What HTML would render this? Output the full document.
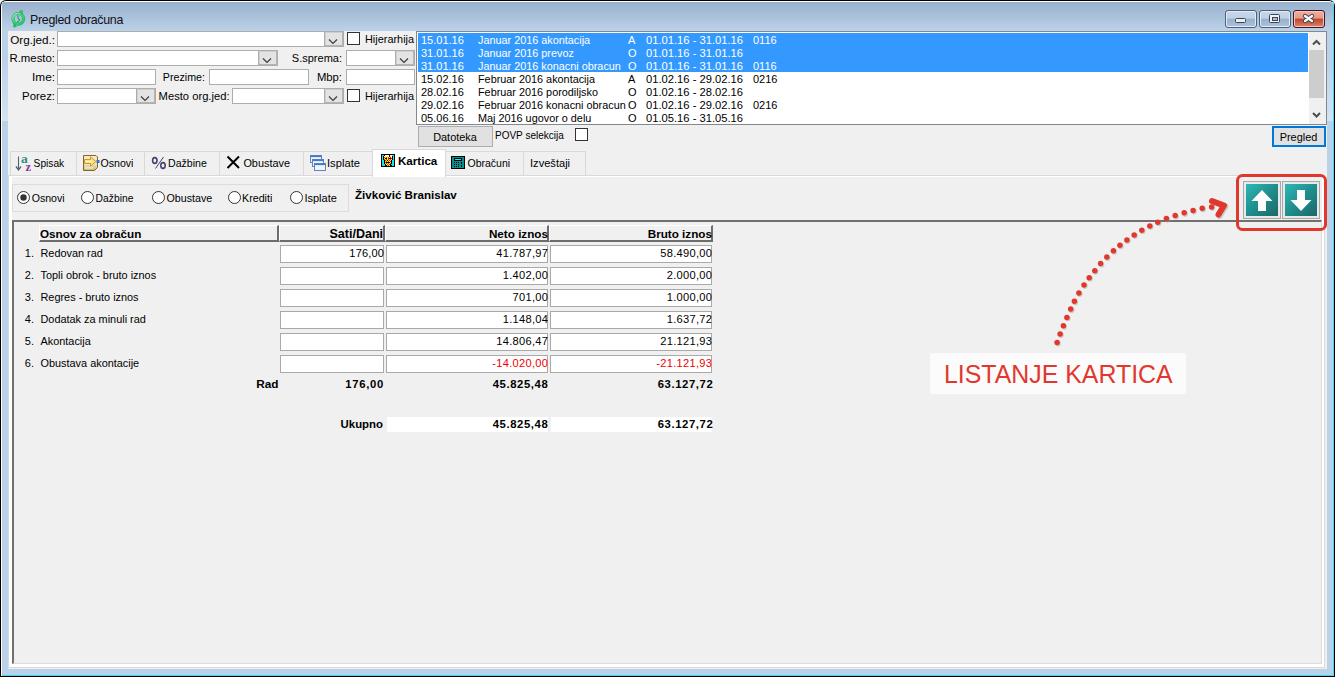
<!DOCTYPE html><html><head><meta charset="utf-8"><style>
html,body{margin:0;padding:0;width:1335px;height:677px;overflow:hidden;background:#f0f0f0}
#root{position:relative;width:1335px;height:677px;overflow:hidden;font-family:'Liberation Sans', sans-serif}
#root div, #root svg{position:absolute}
.t{white-space:pre;line-height:13px;height:13px}

</style></head><body><div id="root">
<div style="left:0px;top:0px;width:1335px;height:677px;background:#000;border-radius:6px 6px 0 0"></div>
<div style="left:1px;top:1px;width:1333px;height:675px;background:#fff;border-radius:5px 5px 0 0"></div>
<div style="left:2px;top:2px;width:1332px;height:674px;background:#3fd8ee"></div>
<div style="left:2px;top:2px;width:1331px;height:673px;background:#bad1ea"></div>
<div style="left:2px;top:2px;width:1331px;height:29px;background:linear-gradient(#98b0cc,#bcd2e9);border-radius:4px 4px 0 0"></div>
<div style="left:2px;top:31px;width:6px;height:90px;background:linear-gradient(#bad1ea 0%,#bad1ea 30%,#d3e3f3 100%)"></div>
<div style="left:1327px;top:31px;width:6px;height:90px;background:linear-gradient(#bad1ea 0%,#bad1ea 30%,#d3e3f3 100%)"></div>
<div style="left:8px;top:31px;width:1319px;height:638px;background:#f0f0f0"></div>
<svg style="left:9px;top:9px" width="20" height="20" viewBox="0 0 20 20">
<defs><linearGradient id="gr" x1="0" y1="0" x2="0.6" y2="1"><stop offset="0" stop-color="#86f2ae"/><stop offset="0.5" stop-color="#2ee070"/><stop offset="1" stop-color="#14d85a"/></linearGradient></defs>
<circle cx="9.3" cy="9.8" r="5.3" fill="none" stroke="#1a8a4c" stroke-width="3.2" stroke-opacity="0.75"/>
<circle cx="9.3" cy="9.8" r="5.3" fill="none" stroke="url(#gr)" stroke-width="2.2"/>
<path d="M10.5 2 L13.5 1.8 L13 5.5 Z" fill="#3fcf7a" stroke="#1a8a4c" stroke-width="0.5"/>
<path d="M7.5 17.8 L4.5 18 L5 14.5 Z" fill="#1ed860" stroke="#1a8a4c" stroke-width="0.5"/>
<path d="M8.3 6.5 C10.5 7.5 7.5 9.2 10 10.2 C11.5 11 9.5 12.5 8.3 13" fill="none" stroke="#2a9a5a" stroke-width="1.1"/>
</svg>
<div class="t" style="left:30px;top:14px;font-size:12.4px;font-weight:normal;color:#10101a;letter-spacing:-0.3px">Pregled obračuna</div>
<div style="left:1225px;top:10px;width:32px;height:18px;box-sizing:border-box;border:1px solid #4f5f78;border-radius:3px;background:linear-gradient(#c6d7ea 0,#bfd1e6 45%,#98b1cc 50%,#abc2da 100%);box-shadow:inset 0 0 0 1px #e3ecf6"></div>
<div style="left:1259px;top:10px;width:32px;height:18px;box-sizing:border-box;border:1px solid #4f5f78;border-radius:3px;background:linear-gradient(#c6d7ea 0,#bfd1e6 45%,#98b1cc 50%,#abc2da 100%);box-shadow:inset 0 0 0 1px #e3ecf6"></div>
<div style="left:1293px;top:10px;width:32px;height:18px;box-sizing:border-box;border:1px solid #4a1020;border-radius:3px;background:linear-gradient(#eeb0a0 0,#e59a87 45%,#c2432a 50%,#d98470 100%);box-shadow:inset 0 0 0 1px #f6c8bb"></div>
<div style="left:1235px;top:18px;width:11px;height:5px;box-sizing:border-box;border:1px solid #3a4658;background:#eeeeee;border-radius:1.5px"></div>
<div style="left:1269px;top:14px;width:11px;height:9px;box-sizing:border-box;border:1px solid #3a4658;background:#f2f2f2;border-radius:1.5px"></div>
<div style="left:1272px;top:17px;width:6px;height:4px;box-sizing:border-box;border:1px solid #3a4658;background:#a8c0da"></div>
<svg style="left:1300px;top:11px" width="17" height="15"><path d="M5 5 L12 10 M12 5 L5 10" stroke="#3a4252" stroke-width="4.2" stroke-linecap="round"/><path d="M5 5 L12 10 M12 5 L5 10" stroke="#f8f8f8" stroke-width="2.4" stroke-linecap="round"/></svg>
<div class="t" style="left:-245px;width:300px;text-align:right;top:33px;font-size:11.7px;font-weight:normal;color:#000;">Org.jed.:</div>
<div class="t" style="left:-245px;width:300px;text-align:right;top:52px;font-size:11.4px;font-weight:normal;color:#000;">R.mesto:</div>
<div class="t" style="left:-245px;width:300px;text-align:right;top:71px;font-size:11.8px;font-weight:normal;color:#000;">Ime:</div>
<div class="t" style="left:-245px;width:300px;text-align:right;top:90px;font-size:11.4px;font-weight:normal;color:#000;">Porez:</div>
<div style="left:57px;top:31px;width:287px;height:16px;box-sizing:border-box;border:1px solid #adadad;background:#fff"></div>
<div style="left:324px;top:31px;width:20px;height:16px;box-sizing:border-box;border:1px solid #adadad;background:#e3e3e3;box-shadow:inset -1px -1px 0 0 #b4b4b4, inset 1px 1px 0 0 #d0d0d0"></div>
<svg style="left:324px;top:31px" width="20" height="16"><polyline points="5.0,8.5 9.0,12.5 13.0,8.5" fill="none" stroke="#3c3c3c" stroke-width="1.2"/></svg>
<div style="left:347px;top:32px;width:13px;height:13px;box-sizing:border-box;border:1px solid #333;background:#fff"></div>
<div class="t" style="left:365px;top:33px;font-size:10.9px;font-weight:normal;color:#000;">Hijerarhija</div>
<div style="left:57px;top:50px;width:221px;height:16px;box-sizing:border-box;border:1px solid #adadad;background:#fff"></div>
<div style="left:258px;top:50px;width:20px;height:16px;box-sizing:border-box;border:1px solid #adadad;background:#e3e3e3;box-shadow:inset -1px -1px 0 0 #b4b4b4, inset 1px 1px 0 0 #d0d0d0"></div>
<svg style="left:258px;top:50px" width="20" height="16"><polyline points="5.0,8.5 9.0,12.5 13.0,8.5" fill="none" stroke="#3c3c3c" stroke-width="1.2"/></svg>
<div class="t" style="left:42px;width:300px;text-align:right;top:52px;font-size:11px;font-weight:normal;color:#000;">S.sprema:</div>
<div style="left:346px;top:50px;width:69px;height:16px;box-sizing:border-box;border:1px solid #adadad;background:#fff"></div>
<div style="left:395px;top:50px;width:20px;height:16px;box-sizing:border-box;border:1px solid #adadad;background:#e3e3e3;box-shadow:inset -1px -1px 0 0 #b4b4b4, inset 1px 1px 0 0 #d0d0d0"></div>
<svg style="left:395px;top:50px" width="20" height="16"><polyline points="5.0,8.5 9.0,12.5 13.0,8.5" fill="none" stroke="#3c3c3c" stroke-width="1.2"/></svg>
<div style="left:57px;top:69px;width:99px;height:16px;box-sizing:border-box;border:1px solid #adadad;background:#fff"></div>
<div class="t" style="left:-95px;width:300px;text-align:right;top:71px;font-size:10.7px;font-weight:normal;color:#000;">Prezime:</div>
<div style="left:209px;top:69px;width:100px;height:16px;box-sizing:border-box;border:1px solid #adadad;background:#fff"></div>
<div class="t" style="left:42px;width:300px;text-align:right;top:71px;font-size:11.3px;font-weight:normal;color:#000;">Mbp:</div>
<div style="left:346px;top:69px;width:69px;height:16px;box-sizing:border-box;border:1px solid #adadad;background:#fff"></div>
<div style="left:57px;top:88px;width:99px;height:16px;box-sizing:border-box;border:1px solid #adadad;background:#fff"></div>
<div style="left:136px;top:88px;width:20px;height:16px;box-sizing:border-box;border:1px solid #adadad;background:#e3e3e3;box-shadow:inset -1px -1px 0 0 #b4b4b4, inset 1px 1px 0 0 #d0d0d0"></div>
<svg style="left:136px;top:88px" width="20" height="16"><polyline points="5.0,8.5 9.0,12.5 13.0,8.5" fill="none" stroke="#3c3c3c" stroke-width="1.2"/></svg>
<div class="t" style="left:-70.5px;width:300px;text-align:right;top:90px;font-size:11.2px;font-weight:normal;color:#000;">Mesto org.jed:</div>
<div style="left:232px;top:88px;width:112px;height:16px;box-sizing:border-box;border:1px solid #adadad;background:#fff"></div>
<div style="left:324px;top:88px;width:20px;height:16px;box-sizing:border-box;border:1px solid #adadad;background:#e3e3e3;box-shadow:inset -1px -1px 0 0 #b4b4b4, inset 1px 1px 0 0 #d0d0d0"></div>
<svg style="left:324px;top:88px" width="20" height="16"><polyline points="5.0,8.5 9.0,12.5 13.0,8.5" fill="none" stroke="#3c3c3c" stroke-width="1.2"/></svg>
<div style="left:347px;top:89px;width:13px;height:13px;box-sizing:border-box;border:1px solid #333;background:#fff"></div>
<div class="t" style="left:365px;top:90px;font-size:10.9px;font-weight:normal;color:#000;">Hijerarhija</div>
<div style="left:416px;top:31px;width:911px;height:94px;box-sizing:border-box;border:1px solid #828790;background:#fff"></div>
<div style="left:417px;top:32px;width:892px;height:92px;overflow:hidden">
<div style="left:1px;top:1px;width:890px;height:13px;background:#3399ff"></div>
<div class="t" style="left:4px;top:2px;font-size:11px;color:#fff">15.01.16</div>
<div class="t" style="left:61px;top:2px;font-size:10.85px;color:#fff">Januar 2016 akontacija</div>
<div class="t" style="left:211px;top:2px;font-size:11px;color:#fff">A</div>
<div class="t" style="left:229px;top:2px;font-size:11.2px;color:#fff">01.01.16 - 31.01.16</div>
<div class="t" style="left:336px;top:2px;font-size:11px;color:#fff">0116</div>
<div style="left:1px;top:14px;width:890px;height:13px;background:#3399ff"></div>
<div class="t" style="left:4px;top:15px;font-size:11px;color:#fff">31.01.16</div>
<div class="t" style="left:61px;top:15px;font-size:10.85px;color:#fff">Januar 2016 prevoz</div>
<div class="t" style="left:211px;top:15px;font-size:11px;color:#fff">O</div>
<div class="t" style="left:229px;top:15px;font-size:11.2px;color:#fff">01.01.16 - 31.01.16</div>
<div style="left:1px;top:27px;width:890px;height:13px;background:#3399ff"></div>
<div class="t" style="left:4px;top:28px;font-size:11px;color:#fff">31.01.16</div>
<div class="t" style="left:61px;top:28px;font-size:10.85px;color:#fff">Januar 2016 konacni obracun</div>
<div class="t" style="left:211px;top:28px;font-size:11px;color:#fff">O</div>
<div class="t" style="left:229px;top:28px;font-size:11.2px;color:#fff">01.01.16 - 31.01.16</div>
<div class="t" style="left:336px;top:28px;font-size:11px;color:#fff">0116</div>
<div class="t" style="left:4px;top:41px;font-size:11px;color:#000">15.02.16</div>
<div class="t" style="left:61px;top:41px;font-size:10.85px;color:#000">Februar 2016 akontacija</div>
<div class="t" style="left:211px;top:41px;font-size:11px;color:#000">A</div>
<div class="t" style="left:229px;top:41px;font-size:11.2px;color:#000">01.02.16 - 29.02.16</div>
<div class="t" style="left:336px;top:41px;font-size:11px;color:#000">0216</div>
<div class="t" style="left:4px;top:54px;font-size:11px;color:#000">28.02.16</div>
<div class="t" style="left:61px;top:54px;font-size:10.85px;color:#000">Februar 2016 porodiljsko</div>
<div class="t" style="left:211px;top:54px;font-size:11px;color:#000">O</div>
<div class="t" style="left:229px;top:54px;font-size:11.2px;color:#000">01.02.16 - 28.02.16</div>
<div class="t" style="left:4px;top:67px;font-size:11px;color:#000">29.02.16</div>
<div class="t" style="left:61px;top:67px;font-size:10.85px;color:#000">Februar 2016 konacni obracun</div>
<div class="t" style="left:211px;top:67px;font-size:11px;color:#000">O</div>
<div class="t" style="left:229px;top:67px;font-size:11.2px;color:#000">01.02.16 - 29.02.16</div>
<div class="t" style="left:336px;top:67px;font-size:11px;color:#000">0216</div>
<div class="t" style="left:4px;top:80px;font-size:11px;color:#000">05.06.16</div>
<div class="t" style="left:61px;top:80px;font-size:10.85px;color:#000">Maj 2016 ugovor o delu</div>
<div class="t" style="left:211px;top:80px;font-size:11px;color:#000">O</div>
<div class="t" style="left:229px;top:80px;font-size:11.2px;color:#000">01.05.16 - 31.05.16</div>
</div>
<div style="left:1309px;top:32px;width:17px;height:92px;background:#f0f0f0"></div>
<div style="left:1309px;top:50px;width:15px;height:48px;background:#cdcdcd"></div>
<svg style="left:1309px;top:32px" width="17" height="92"><polyline points="4,12.5 7.5,9 11,12.5" fill="none" stroke="#4d4d4d" stroke-width="2"/><polyline points="4,81 7.5,84.5 11,81" fill="none" stroke="#4d4d4d" stroke-width="2"/></svg>
<div style="left:418px;top:126px;width:75px;height:21px;box-sizing:border-box;border:1px solid #adadad;background:#e1e1e1"></div>
<div class="t" style="left:305px;width:300px;text-align:center;top:131px;font-size:10.9px;font-weight:normal;color:#000;">Datoteka</div>
<div class="t" style="left:495px;top:129px;font-size:10px;font-weight:normal;color:#000;">POVP selekcija</div>
<div style="left:575px;top:128px;width:13px;height:13px;box-sizing:border-box;border:1px solid #333;background:#fff"></div>
<div style="left:1272px;top:126px;width:54px;height:21px;box-sizing:border-box;border:2px solid #0078d7;background:#e1e1e1"></div>
<div class="t" style="left:1148.5px;width:300px;text-align:center;top:131px;font-size:10.9px;font-weight:normal;color:#000;">Pregled</div>
<div style="left:10px;top:151px;width:67px;height:25px;box-sizing:border-box;border:1px solid #d9d9d9;border-bottom:none;background:#f0f0f0"></div>
<div style="left:76px;top:151px;width:69px;height:25px;box-sizing:border-box;border:1px solid #d9d9d9;border-bottom:none;background:#f0f0f0"></div>
<div style="left:144px;top:151px;width:76px;height:25px;box-sizing:border-box;border:1px solid #d9d9d9;border-bottom:none;background:#f0f0f0"></div>
<div style="left:219px;top:151px;width:85px;height:25px;box-sizing:border-box;border:1px solid #d9d9d9;border-bottom:none;background:#f0f0f0"></div>
<div style="left:303px;top:151px;width:70px;height:25px;box-sizing:border-box;border:1px solid #d9d9d9;border-bottom:none;background:#f0f0f0"></div>
<div style="left:445px;top:151px;width:79px;height:25px;box-sizing:border-box;border:1px solid #d9d9d9;border-bottom:none;background:#f0f0f0"></div>
<div style="left:523px;top:151px;width:63px;height:25px;box-sizing:border-box;border:1px solid #d9d9d9;border-bottom:none;background:#f0f0f0"></div>
<div class="t" style="left:33.6px;top:157px;font-size:10.2px;font-weight:normal;color:#000;">Spisak</div>
<div class="t" style="left:100.5px;top:157px;font-size:10.6px;font-weight:normal;color:#000;">Osnovi</div>
<div class="t" style="left:168px;top:157px;font-size:10.6px;font-weight:normal;color:#000;">Dažbine</div>
<div class="t" style="left:243.4px;top:157px;font-size:10.9px;font-weight:normal;color:#000;">Obustave</div>
<div class="t" style="left:327px;top:157px;font-size:11.2px;font-weight:normal;color:#000;">Isplate</div>
<div class="t" style="left:467.5px;top:157px;font-size:10.5px;font-weight:normal;color:#000;">Obračuni</div>
<div class="t" style="left:530px;top:157px;font-size:11.1px;font-weight:normal;color:#000;">Izveštaji</div>
<div style="left:8px;top:175px;width:1317px;height:493px;box-sizing:border-box;border:1px solid #d9d9d9;background:#fff"></div>
<div style="left:12px;top:177px;width:1310px;height:487px;background:#f0f0f0"></div>
<div style="left:372px;top:149px;width:74px;height:28px;box-sizing:border-box;border:1px solid #d9d9d9;border-bottom:none;background:#fff"></div>
<div class="t" style="left:398px;top:154px;font-size:11.6px;font-weight:bold;color:#000;">Kartica</div>
<svg style="left:15px;top:154px" width="19" height="18">
<path d="M3.5 2.5 V15" stroke="#4f6275" stroke-width="1.1"/><path d="M1 12.5 L3.5 16 L6 12.5" fill="none" stroke="#4f6275" stroke-width="1.3"/>
<text x="6" y="8.8" font-family="Liberation Serif" font-weight="bold" font-size="13.5" fill="#2a8f7e">a</text>
<text x="10.6" y="16.9" font-family="Liberation Serif" font-weight="bold" font-size="12.5" fill="#8c3a9e">z</text>
</svg>
<svg style="left:83px;top:155px" width="17" height="16">
<defs><linearGradient id="og" x1="0" y1="0" x2="0" y2="1"><stop offset="0" stop-color="#f2ecc8"/><stop offset="0.6" stop-color="#eae2b8"/><stop offset="1" stop-color="#c8b478"/></linearGradient></defs>
<path d="M0.5 0.5 H13 L14.5 2 V12.5 L11.5 15.5 H0.5 Z" fill="url(#og)" stroke="#8b6428"/>
<path d="M1.5 4.5 H7.5 V1.8 L12.8 6.5 L7.5 11.2 V8.5 H1.5 Z" fill="#fbe17a" stroke="#c8901c" stroke-width="0.9"/>
<path d="M2.5 6.5 H9" stroke="#fff6c8" stroke-width="1.2"/>
<path d="M2 13 H10" stroke="#fffbe8" stroke-width="1"/>
<rect x="13.5" y="5" width="3" height="3" fill="#3a6cc0"/>
</svg>
<svg style="left:151px;top:156px" width="17" height="14">
<ellipse cx="3.8" cy="4.5" rx="2.2" ry="2.9" fill="none" stroke="#4a3f73" stroke-width="1.6"/>
<ellipse cx="12" cy="9.5" rx="2.2" ry="2.9" fill="none" stroke="#4a3f73" stroke-width="1.6"/>
<path d="M12.5 1 L4.5 12.5" stroke="#4a3f73" stroke-width="1"/>
</svg>
<svg style="left:226px;top:155px" width="15" height="15">
<path d="M1.5 1.5 L13 13 M13 1.5 L1.5 13" stroke="#000" stroke-width="2"/>
</svg>
<svg style="left:309px;top:154px" width="18" height="18">
<g stroke="#5a78b0" stroke-width="0.9">
<rect x="1.5" y="1.5" width="11" height="7" fill="#eef4fc"/><rect x="1.5" y="1.5" width="11" height="1.6" fill="#3f7ad0" stroke="none"/>
<rect x="3.5" y="5.5" width="11" height="7" fill="#eef4fc"/><rect x="3.5" y="5.5" width="11" height="1.6" fill="#3f7ad0" stroke="none"/>
<rect x="5.5" y="9.5" width="11" height="7" fill="#eef4fc"/><rect x="5.5" y="9.5" width="11" height="1.6" fill="#3f7ad0" stroke="none"/>
</g></svg>
<svg style="left:381px;top:154px" width="14" height="13" shape-rendering="crispEdges"><rect x="0" y="0" width="1" height="1" fill="#000"/><rect x="1" y="0" width="1" height="1" fill="#000"/><rect x="2" y="0" width="1" height="1" fill="#000"/><rect x="3" y="0" width="1" height="1" fill="#000"/><rect x="4" y="0" width="1" height="1" fill="#000"/><rect x="5" y="0" width="1" height="1" fill="#000"/><rect x="6" y="0" width="1" height="1" fill="#000"/><rect x="7" y="0" width="1" height="1" fill="#000"/><rect x="8" y="0" width="1" height="1" fill="#000"/><rect x="9" y="0" width="1" height="1" fill="#000"/><rect x="10" y="0" width="1" height="1" fill="#000"/><rect x="11" y="0" width="1" height="1" fill="#000"/><rect x="12" y="0" width="1" height="1" fill="#000"/><rect x="13" y="0" width="1" height="1" fill="#000"/><rect x="0" y="1" width="1" height="1" fill="#000"/><rect x="1" y="1" width="1" height="1" fill="#12e6f0"/><rect x="2" y="1" width="1" height="1" fill="#12e6f0"/><rect x="3" y="1" width="1" height="1" fill="#000"/><rect x="4" y="1" width="1" height="1" fill="#ffffff"/><rect x="5" y="1" width="1" height="1" fill="#ffffff"/><rect x="6" y="1" width="1" height="1" fill="#ffffff"/><rect x="7" y="1" width="1" height="1" fill="#ffffff"/><rect x="8" y="1" width="1" height="1" fill="#000"/><rect x="9" y="1" width="1" height="1" fill="#ffffff"/><rect x="10" y="1" width="1" height="1" fill="#ffffff"/><rect x="11" y="1" width="1" height="1" fill="#12e6f0"/><rect x="12" y="1" width="1" height="1" fill="#12e6f0"/><rect x="13" y="1" width="1" height="1" fill="#000"/><rect x="0" y="2" width="1" height="1" fill="#000"/><rect x="1" y="2" width="1" height="1" fill="#12e6f0"/><rect x="2" y="2" width="1" height="1" fill="#000"/><rect x="3" y="2" width="1" height="1" fill="#ffffff"/><rect x="4" y="2" width="1" height="1" fill="#f6f020"/><rect x="5" y="2" width="1" height="1" fill="#ffffff"/><rect x="6" y="2" width="1" height="1" fill="#f6f020"/><rect x="7" y="2" width="1" height="1" fill="#ffffff"/><rect x="8" y="2" width="1" height="1" fill="#000"/><rect x="9" y="2" width="1" height="1" fill="#f6f020"/><rect x="10" y="2" width="1" height="1" fill="#ffffff"/><rect x="11" y="2" width="1" height="1" fill="#000"/><rect x="12" y="2" width="1" height="1" fill="#12e6f0"/><rect x="13" y="2" width="1" height="1" fill="#000"/><rect x="0" y="3" width="1" height="1" fill="#000"/><rect x="1" y="3" width="1" height="1" fill="#12e6f0"/><rect x="2" y="3" width="1" height="1" fill="#000"/><rect x="3" y="3" width="1" height="1" fill="#e52a18"/><rect x="4" y="3" width="1" height="1" fill="#f6f020"/><rect x="5" y="3" width="1" height="1" fill="#e52a18"/><rect x="6" y="3" width="1" height="1" fill="#f6f020"/><rect x="7" y="3" width="1" height="1" fill="#e52a18"/><rect x="8" y="3" width="1" height="1" fill="#f6f020"/><rect x="9" y="3" width="1" height="1" fill="#e52a18"/><rect x="10" y="3" width="1" height="1" fill="#f6f020"/><rect x="11" y="3" width="1" height="1" fill="#000"/><rect x="12" y="3" width="1" height="1" fill="#12e6f0"/><rect x="13" y="3" width="1" height="1" fill="#000"/><rect x="0" y="4" width="1" height="1" fill="#000"/><rect x="1" y="4" width="1" height="1" fill="#12e6f0"/><rect x="2" y="4" width="1" height="1" fill="#000"/><rect x="3" y="4" width="1" height="1" fill="#f6f020"/><rect x="4" y="4" width="1" height="1" fill="#000"/><rect x="5" y="4" width="1" height="1" fill="#000"/><rect x="6" y="4" width="1" height="1" fill="#f6f020"/><rect x="7" y="4" width="1" height="1" fill="#e52a18"/><rect x="8" y="4" width="1" height="1" fill="#000"/><rect x="9" y="4" width="1" height="1" fill="#000"/><rect x="10" y="4" width="1" height="1" fill="#e52a18"/><rect x="11" y="4" width="1" height="1" fill="#000"/><rect x="12" y="4" width="1" height="1" fill="#12e6f0"/><rect x="13" y="4" width="1" height="1" fill="#000"/><rect x="0" y="5" width="1" height="1" fill="#000"/><rect x="1" y="5" width="1" height="1" fill="#12e6f0"/><rect x="2" y="5" width="1" height="1" fill="#000"/><rect x="3" y="5" width="1" height="1" fill="#e52a18"/><rect x="4" y="5" width="1" height="1" fill="#f6f020"/><rect x="5" y="5" width="1" height="1" fill="#e52a18"/><rect x="6" y="5" width="1" height="1" fill="#f6f020"/><rect x="7" y="5" width="1" height="1" fill="#e52a18"/><rect x="8" y="5" width="1" height="1" fill="#f6f020"/><rect x="9" y="5" width="1" height="1" fill="#e52a18"/><rect x="10" y="5" width="1" height="1" fill="#f6f020"/><rect x="11" y="5" width="1" height="1" fill="#000"/><rect x="12" y="5" width="1" height="1" fill="#12e6f0"/><rect x="13" y="5" width="1" height="1" fill="#000"/><rect x="0" y="6" width="1" height="1" fill="#000"/><rect x="1" y="6" width="1" height="1" fill="#12e6f0"/><rect x="2" y="6" width="1" height="1" fill="#12e6f0"/><rect x="3" y="6" width="1" height="1" fill="#000"/><rect x="4" y="6" width="1" height="1" fill="#e52a18"/><rect x="5" y="6" width="1" height="1" fill="#f6f020"/><rect x="6" y="6" width="1" height="1" fill="#000"/><rect x="7" y="6" width="1" height="1" fill="#f6f020"/><rect x="8" y="6" width="1" height="1" fill="#e52a18"/><rect x="9" y="6" width="1" height="1" fill="#f6f020"/><rect x="10" y="6" width="1" height="1" fill="#000"/><rect x="11" y="6" width="1" height="1" fill="#12e6f0"/><rect x="12" y="6" width="1" height="1" fill="#12e6f0"/><rect x="13" y="6" width="1" height="1" fill="#000"/><rect x="0" y="7" width="1" height="1" fill="#000"/><rect x="1" y="7" width="1" height="1" fill="#12e6f0"/><rect x="2" y="7" width="1" height="1" fill="#12e6f0"/><rect x="3" y="7" width="1" height="1" fill="#000"/><rect x="4" y="7" width="1" height="1" fill="#f6f020"/><rect x="5" y="7" width="1" height="1" fill="#e52a18"/><rect x="6" y="7" width="1" height="1" fill="#f6f020"/><rect x="7" y="7" width="1" height="1" fill="#e52a18"/><rect x="8" y="7" width="1" height="1" fill="#f6f020"/><rect x="9" y="7" width="1" height="1" fill="#e52a18"/><rect x="10" y="7" width="1" height="1" fill="#000"/><rect x="11" y="7" width="1" height="1" fill="#12e6f0"/><rect x="12" y="7" width="1" height="1" fill="#12e6f0"/><rect x="13" y="7" width="1" height="1" fill="#000"/><rect x="0" y="8" width="1" height="1" fill="#000"/><rect x="1" y="8" width="1" height="1" fill="#12e6f0"/><rect x="2" y="8" width="1" height="1" fill="#12e6f0"/><rect x="3" y="8" width="1" height="1" fill="#000"/><rect x="4" y="8" width="1" height="1" fill="#e52a18"/><rect x="5" y="8" width="1" height="1" fill="#000"/><rect x="6" y="8" width="1" height="1" fill="#000"/><rect x="7" y="8" width="1" height="1" fill="#000"/><rect x="8" y="8" width="1" height="1" fill="#000"/><rect x="9" y="8" width="1" height="1" fill="#f6f020"/><rect x="10" y="8" width="1" height="1" fill="#000"/><rect x="11" y="8" width="1" height="1" fill="#12e6f0"/><rect x="12" y="8" width="1" height="1" fill="#12e6f0"/><rect x="13" y="8" width="1" height="1" fill="#000"/><rect x="0" y="9" width="1" height="1" fill="#000"/><rect x="1" y="9" width="1" height="1" fill="#12e6f0"/><rect x="2" y="9" width="1" height="1" fill="#12e6f0"/><rect x="3" y="9" width="1" height="1" fill="#000"/><rect x="4" y="9" width="1" height="1" fill="#f6f020"/><rect x="5" y="9" width="1" height="1" fill="#e52a18"/><rect x="6" y="9" width="1" height="1" fill="#f6f020"/><rect x="7" y="9" width="1" height="1" fill="#e52a18"/><rect x="8" y="9" width="1" height="1" fill="#f6f020"/><rect x="9" y="9" width="1" height="1" fill="#e52a18"/><rect x="10" y="9" width="1" height="1" fill="#000"/><rect x="11" y="9" width="1" height="1" fill="#12e6f0"/><rect x="12" y="9" width="1" height="1" fill="#12e6f0"/><rect x="13" y="9" width="1" height="1" fill="#000"/><rect x="0" y="10" width="1" height="1" fill="#000"/><rect x="1" y="10" width="1" height="1" fill="#12e6f0"/><rect x="2" y="10" width="1" height="1" fill="#12e6f0"/><rect x="3" y="10" width="1" height="1" fill="#12e6f0"/><rect x="4" y="10" width="1" height="1" fill="#000"/><rect x="5" y="10" width="1" height="1" fill="#f6f020"/><rect x="6" y="10" width="1" height="1" fill="#e52a18"/><rect x="7" y="10" width="1" height="1" fill="#f6f020"/><rect x="8" y="10" width="1" height="1" fill="#e52a18"/><rect x="9" y="10" width="1" height="1" fill="#000"/><rect x="10" y="10" width="1" height="1" fill="#12e6f0"/><rect x="11" y="10" width="1" height="1" fill="#12e6f0"/><rect x="12" y="10" width="1" height="1" fill="#12e6f0"/><rect x="13" y="10" width="1" height="1" fill="#000"/><rect x="0" y="11" width="1" height="1" fill="#000"/><rect x="1" y="11" width="1" height="1" fill="#12e6f0"/><rect x="2" y="11" width="1" height="1" fill="#12e6f0"/><rect x="3" y="11" width="1" height="1" fill="#12e6f0"/><rect x="4" y="11" width="1" height="1" fill="#000"/><rect x="5" y="11" width="1" height="1" fill="#000"/><rect x="6" y="11" width="1" height="1" fill="#f6f020"/><rect x="7" y="11" width="1" height="1" fill="#e52a18"/><rect x="8" y="11" width="1" height="1" fill="#f6f020"/><rect x="9" y="11" width="1" height="1" fill="#000"/><rect x="10" y="11" width="1" height="1" fill="#000"/><rect x="11" y="11" width="1" height="1" fill="#12e6f0"/><rect x="12" y="11" width="1" height="1" fill="#12e6f0"/><rect x="13" y="11" width="1" height="1" fill="#000"/><rect x="0" y="12" width="1" height="1" fill="#000"/><rect x="1" y="12" width="1" height="1" fill="#000"/><rect x="2" y="12" width="1" height="1" fill="#000"/><rect x="3" y="12" width="1" height="1" fill="#000"/><rect x="4" y="12" width="1" height="1" fill="#000"/><rect x="5" y="12" width="1" height="1" fill="#000"/><rect x="6" y="12" width="1" height="1" fill="#000"/><rect x="7" y="12" width="1" height="1" fill="#000"/><rect x="8" y="12" width="1" height="1" fill="#000"/><rect x="9" y="12" width="1" height="1" fill="#000"/><rect x="10" y="12" width="1" height="1" fill="#000"/><rect x="11" y="12" width="1" height="1" fill="#000"/><rect x="12" y="12" width="1" height="1" fill="#000"/><rect x="13" y="12" width="1" height="1" fill="#000"/></svg>
<svg style="left:451px;top:156px" width="14" height="13">
<rect x="0" y="0" width="14" height="13" fill="#000"/>
<rect x="1" y="1" width="12" height="11" fill="#0a8f8f"/>
<rect x="3" y="2" width="8" height="3" fill="#000"/><rect x="4" y="3" width="6" height="1" fill="#10f0f0"/>
<g fill="#000"><rect x="3" y="6" width="1" height="1"/><rect x="5" y="6" width="1" height="1"/><rect x="7" y="6" width="1" height="1"/>
<rect x="3" y="8" width="1" height="1"/><rect x="5" y="8" width="1" height="1"/><rect x="7" y="8" width="1" height="1"/>
<rect x="3" y="10" width="1" height="1"/><rect x="5" y="10" width="1" height="1"/><rect x="7" y="10" width="1" height="1"/>
<rect x="10" y="6" width="1" height="2"/><rect x="10" y="9" width="1" height="2"/></g>
</svg>
<div style="left:12px;top:184px;width:337px;height:28px;box-sizing:border-box;border:1px solid #dcdcdc;background:#f0f0f0"></div>
<svg style="left:17px;top:191px" width="13" height="13"><circle cx="6.5" cy="6.5" r="6" fill="#fff" stroke="#333" stroke-width="1"/><circle cx="6.5" cy="6.5" r="3.2" fill="#333"/></svg>
<div class="t" style="left:31.7px;top:192px;font-size:10.6px;font-weight:normal;color:#000;">Osnovi</div>
<svg style="left:81px;top:191px" width="13" height="13"><circle cx="6.5" cy="6.5" r="6" fill="#fff" stroke="#333" stroke-width="1"/></svg>
<div class="t" style="left:95.6px;top:192px;font-size:10.3px;font-weight:normal;color:#000;">Dažbine</div>
<svg style="left:152px;top:191px" width="13" height="13"><circle cx="6.5" cy="6.5" r="6" fill="#fff" stroke="#333" stroke-width="1"/></svg>
<div class="t" style="left:166.5px;top:192px;font-size:10.7px;font-weight:normal;color:#000;">Obustave</div>
<svg style="left:228px;top:191px" width="13" height="13"><circle cx="6.5" cy="6.5" r="6" fill="#fff" stroke="#333" stroke-width="1"/></svg>
<div class="t" style="left:242px;top:192px;font-size:10.7px;font-weight:normal;color:#000;">Krediti</div>
<svg style="left:290px;top:191px" width="13" height="13"><circle cx="6.5" cy="6.5" r="6" fill="#fff" stroke="#333" stroke-width="1"/></svg>
<div class="t" style="left:304.4px;top:192px;font-size:11px;font-weight:normal;color:#000;">Isplate</div>
<div class="t" style="left:355px;top:188px;font-size:11.6px;font-weight:bold;color:#000;">Živković Branislav</div>
<div style="left:12px;top:220px;width:1310px;height:444px;box-sizing:border-box;border-left:2px solid #707070;border-top:2px solid #707070;border-right:1px solid #dcdcdc;border-bottom:1px solid #dcdcdc;background:#f0f0f0"></div>
<div style="left:39px;top:225px;width:240px;height:17px;box-sizing:border-box;border-top:1px solid #fff;border-left:1px solid #fff;border-right:2px solid #6d6d6d;border-bottom:2px solid #6d6d6d;background:#f0f0f0"></div>
<div style="left:279px;top:225px;width:106px;height:17px;box-sizing:border-box;border-top:1px solid #fff;border-left:1px solid #fff;border-right:2px solid #6d6d6d;border-bottom:2px solid #6d6d6d;background:#f0f0f0"></div>
<div style="left:385px;top:225px;width:164px;height:17px;box-sizing:border-box;border-top:1px solid #fff;border-left:1px solid #fff;border-right:2px solid #6d6d6d;border-bottom:2px solid #6d6d6d;background:#f0f0f0"></div>
<div style="left:549px;top:225px;width:164px;height:17px;box-sizing:border-box;border-top:1px solid #fff;border-left:1px solid #fff;border-right:2px solid #6d6d6d;border-bottom:2px solid #6d6d6d;background:#f0f0f0"></div>
<div class="t" style="left:40px;top:227px;font-size:11.7px;font-weight:bold;color:#000;">Osnov za obračun</div>
<div class="t" style="left:83px;width:300px;text-align:right;top:228px;font-size:12.5px;font-weight:bold;color:#000;">Sati/Dani</div>
<div class="t" style="left:248px;width:300px;text-align:right;top:227px;font-size:11.7px;font-weight:bold;color:#000;">Neto iznos</div>
<div class="t" style="left:412px;width:300px;text-align:right;top:227px;font-size:11.7px;font-weight:bold;color:#000;">Bruto iznos</div>
<div class="t" style="left:-266px;width:300px;text-align:right;top:247px;font-size:11px;font-weight:normal;color:#000;">1.</div>
<div class="t" style="left:40.5px;top:247px;font-size:10.9px;font-weight:normal;color:#000;">Redovan rad</div>
<div style="left:280px;top:245px;width:104px;height:18px;box-sizing:border-box;border:1px solid #a9a9a9;background:#fff"></div>
<div style="left:386px;top:245px;width:162px;height:18px;box-sizing:border-box;border:1px solid #a9a9a9;background:#fff"></div>
<div style="left:550px;top:245px;width:162px;height:18px;box-sizing:border-box;border:1px solid #a9a9a9;background:#fff"></div>
<div class="t" style="left:84.19999999999999px;width:300px;text-align:right;top:247px;font-size:11px;font-weight:normal;color:#000;letter-spacing:0.2px">176,00</div>
<div class="t" style="left:248.29999999999995px;width:300px;text-align:right;top:247px;font-size:11.1px;font-weight:normal;color:#000;letter-spacing:0.3px">41.787,97</div>
<div class="t" style="left:412.29999999999995px;width:300px;text-align:right;top:247px;font-size:11.1px;font-weight:normal;color:#000;letter-spacing:0.3px">58.490,00</div>
<div class="t" style="left:-266px;width:300px;text-align:right;top:269px;font-size:11px;font-weight:normal;color:#000;">2.</div>
<div class="t" style="left:40.5px;top:269px;font-size:10.9px;font-weight:normal;color:#000;">Topli obrok - bruto iznos</div>
<div style="left:280px;top:267px;width:104px;height:18px;box-sizing:border-box;border:1px solid #a9a9a9;background:#fff"></div>
<div style="left:386px;top:267px;width:162px;height:18px;box-sizing:border-box;border:1px solid #a9a9a9;background:#fff"></div>
<div style="left:550px;top:267px;width:162px;height:18px;box-sizing:border-box;border:1px solid #a9a9a9;background:#fff"></div>
<div class="t" style="left:248.29999999999995px;width:300px;text-align:right;top:269px;font-size:11.1px;font-weight:normal;color:#000;letter-spacing:0.3px">1.402,00</div>
<div class="t" style="left:412.29999999999995px;width:300px;text-align:right;top:269px;font-size:11.1px;font-weight:normal;color:#000;letter-spacing:0.3px">2.000,00</div>
<div class="t" style="left:-266px;width:300px;text-align:right;top:291px;font-size:11px;font-weight:normal;color:#000;">3.</div>
<div class="t" style="left:40.5px;top:291px;font-size:10.9px;font-weight:normal;color:#000;">Regres - bruto iznos</div>
<div style="left:280px;top:289px;width:104px;height:18px;box-sizing:border-box;border:1px solid #a9a9a9;background:#fff"></div>
<div style="left:386px;top:289px;width:162px;height:18px;box-sizing:border-box;border:1px solid #a9a9a9;background:#fff"></div>
<div style="left:550px;top:289px;width:162px;height:18px;box-sizing:border-box;border:1px solid #a9a9a9;background:#fff"></div>
<div class="t" style="left:248.29999999999995px;width:300px;text-align:right;top:291px;font-size:11.1px;font-weight:normal;color:#000;letter-spacing:0.3px">701,00</div>
<div class="t" style="left:412.29999999999995px;width:300px;text-align:right;top:291px;font-size:11.1px;font-weight:normal;color:#000;letter-spacing:0.3px">1.000,00</div>
<div class="t" style="left:-266px;width:300px;text-align:right;top:313px;font-size:11px;font-weight:normal;color:#000;">4.</div>
<div class="t" style="left:40.5px;top:313px;font-size:10.9px;font-weight:normal;color:#000;">Dodatak za minuli rad</div>
<div style="left:280px;top:311px;width:104px;height:18px;box-sizing:border-box;border:1px solid #a9a9a9;background:#fff"></div>
<div style="left:386px;top:311px;width:162px;height:18px;box-sizing:border-box;border:1px solid #a9a9a9;background:#fff"></div>
<div style="left:550px;top:311px;width:162px;height:18px;box-sizing:border-box;border:1px solid #a9a9a9;background:#fff"></div>
<div class="t" style="left:248.29999999999995px;width:300px;text-align:right;top:313px;font-size:11.1px;font-weight:normal;color:#000;letter-spacing:0.3px">1.148,04</div>
<div class="t" style="left:412.29999999999995px;width:300px;text-align:right;top:313px;font-size:11.1px;font-weight:normal;color:#000;letter-spacing:0.3px">1.637,72</div>
<div class="t" style="left:-266px;width:300px;text-align:right;top:335px;font-size:11px;font-weight:normal;color:#000;">5.</div>
<div class="t" style="left:40.5px;top:335px;font-size:10.9px;font-weight:normal;color:#000;">Akontacija</div>
<div style="left:280px;top:333px;width:104px;height:18px;box-sizing:border-box;border:1px solid #a9a9a9;background:#fff"></div>
<div style="left:386px;top:333px;width:162px;height:18px;box-sizing:border-box;border:1px solid #a9a9a9;background:#fff"></div>
<div style="left:550px;top:333px;width:162px;height:18px;box-sizing:border-box;border:1px solid #a9a9a9;background:#fff"></div>
<div class="t" style="left:248.29999999999995px;width:300px;text-align:right;top:335px;font-size:11.1px;font-weight:normal;color:#000;letter-spacing:0.3px">14.806,47</div>
<div class="t" style="left:412.29999999999995px;width:300px;text-align:right;top:335px;font-size:11.1px;font-weight:normal;color:#000;letter-spacing:0.3px">21.121,93</div>
<div class="t" style="left:-266px;width:300px;text-align:right;top:357px;font-size:11px;font-weight:normal;color:#000;">6.</div>
<div class="t" style="left:40.5px;top:357px;font-size:10.9px;font-weight:normal;color:#000;">Obustava akontacije</div>
<div style="left:280px;top:355px;width:104px;height:18px;box-sizing:border-box;border:1px solid #a9a9a9;background:#fff"></div>
<div style="left:386px;top:355px;width:162px;height:18px;box-sizing:border-box;border:1px solid #a9a9a9;background:#fff"></div>
<div style="left:550px;top:355px;width:162px;height:18px;box-sizing:border-box;border:1px solid #a9a9a9;background:#fff"></div>
<div class="t" style="left:248.29999999999995px;width:300px;text-align:right;top:357px;font-size:11.1px;font-weight:normal;color:#f00000;letter-spacing:0.3px">-14.020,00</div>
<div class="t" style="left:412.29999999999995px;width:300px;text-align:right;top:357px;font-size:11.1px;font-weight:normal;color:#f00000;letter-spacing:0.3px">-21.121,93</div>
<div class="t" style="left:-21.5px;width:300px;text-align:right;top:378px;font-size:11.8px;font-weight:bold;color:#000;">Rad</div>
<div class="t" style="left:84px;width:300px;text-align:right;top:378px;font-size:11.3px;font-weight:bold;color:#000;letter-spacing:0.7px">176,00</div>
<div class="t" style="left:248.29999999999995px;width:300px;text-align:right;top:378px;font-size:11.3px;font-weight:bold;color:#000;letter-spacing:0.6px">45.825,48</div>
<div class="t" style="left:413.29999999999995px;width:300px;text-align:right;top:378px;font-size:11.3px;font-weight:bold;color:#000;letter-spacing:0.6px">63.127,72</div>
<div style="left:387px;top:417px;width:161px;height:15px;background:#fff"></div>
<div style="left:551px;top:417px;width:161px;height:15px;background:#fff"></div>
<div class="t" style="left:83px;width:300px;text-align:right;top:418px;font-size:11.4px;font-weight:bold;color:#000;">Ukupno</div>
<div class="t" style="left:248.29999999999995px;width:300px;text-align:right;top:418px;font-size:11.3px;font-weight:bold;color:#000;letter-spacing:0.6px">45.825,48</div>
<div class="t" style="left:413.29999999999995px;width:300px;text-align:right;top:418px;font-size:11.3px;font-weight:bold;color:#000;letter-spacing:0.6px">63.127,72</div>
<div style="left:1243px;top:181px;width:38px;height:38px;box-sizing:border-box;border:1px solid #a8a8a8;background:#e9e9e9"></div>
<div style="left:1246px;top:184px;width:32px;height:32px;background:linear-gradient(135deg,#2db8b6 0%,#1f8e8d 50%,#1d6866 100%)"></div>
<svg style="left:1246px;top:184px" width="32" height="32"><path d="M16 6 L26.5 17 H20 V27 H12 V17 H5.5 Z" fill="#fff"/></svg>
<div style="left:1282px;top:181px;width:38px;height:38px;box-sizing:border-box;border:1px solid #a8a8a8;background:#e9e9e9"></div>
<div style="left:1285px;top:184px;width:32px;height:32px;background:linear-gradient(135deg,#2db8b6 0%,#1f8e8d 50%,#1d6866 100%)"></div>
<svg style="left:1285px;top:184px" width="32" height="32"><path d="M16 27 L26.5 16 H20 V6 H12 V16 H5.5 Z" fill="#fff"/></svg>
<svg style="left:0;top:0" width="1335" height="677">
<rect x="1237.5" y="175.5" width="88" height="54" rx="5" ry="5" fill="none" stroke="#e2372d" stroke-width="3"/>
<circle cx="1058.0" cy="343.6" r="2.8" fill="#9a9a9a" fill-opacity="0.45"/><circle cx="1061.0" cy="335.1" r="2.8" fill="#9a9a9a" fill-opacity="0.45"/><circle cx="1064.3000000000002" cy="326.8" r="2.8" fill="#9a9a9a" fill-opacity="0.45"/><circle cx="1067.8000000000002" cy="318.5" r="2.8" fill="#9a9a9a" fill-opacity="0.45"/><circle cx="1071.6000000000001" cy="310.20000000000005" r="2.8" fill="#9a9a9a" fill-opacity="0.45"/><circle cx="1075.3000000000002" cy="302.40000000000003" r="2.8" fill="#9a9a9a" fill-opacity="0.45"/><circle cx="1079.8000000000002" cy="294.1" r="2.8" fill="#9a9a9a" fill-opacity="0.45"/><circle cx="1084.9" cy="286.1" r="2.8" fill="#9a9a9a" fill-opacity="0.45"/><circle cx="1090.1000000000001" cy="278.8" r="2.8" fill="#9a9a9a" fill-opacity="0.45"/><circle cx="1095.7" cy="271.8" r="2.8" fill="#9a9a9a" fill-opacity="0.45"/><circle cx="1101.5" cy="264.70000000000005" r="2.8" fill="#9a9a9a" fill-opacity="0.45"/><circle cx="1107.7" cy="258.20000000000005" r="2.8" fill="#9a9a9a" fill-opacity="0.45"/><circle cx="1114.3000000000002" cy="251.9" r="2.8" fill="#9a9a9a" fill-opacity="0.45"/><circle cx="1120.8000000000002" cy="246.4" r="2.8" fill="#9a9a9a" fill-opacity="0.45"/><circle cx="1127.8000000000002" cy="241.1" r="2.8" fill="#9a9a9a" fill-opacity="0.45"/><circle cx="1135.1000000000001" cy="236.1" r="2.8" fill="#9a9a9a" fill-opacity="0.45"/><circle cx="1142.7" cy="231.29999999999998" r="2.8" fill="#9a9a9a" fill-opacity="0.45"/><circle cx="1150.7" cy="227.0" r="2.8" fill="#9a9a9a" fill-opacity="0.45"/><circle cx="1158.7" cy="223.29999999999998" r="2.8" fill="#9a9a9a" fill-opacity="0.45"/><circle cx="1167.3000000000002" cy="219.7" r="2.8" fill="#9a9a9a" fill-opacity="0.45"/><circle cx="1176.1000000000001" cy="216.7" r="2.8" fill="#9a9a9a" fill-opacity="0.45"/><circle cx="1185.1000000000001" cy="213.9" r="2.8" fill="#9a9a9a" fill-opacity="0.45"/><circle cx="1194.0" cy="211.6" r="2.8" fill="#9a9a9a" fill-opacity="0.45"/><circle cx="1203.1000000000001" cy="209.4" r="2.8" fill="#9a9a9a" fill-opacity="0.45"/><circle cx="1212.5" cy="208.1" r="2.8" fill="#9a9a9a" fill-opacity="0.45"/><path d="M1213 202 L1225.5 206.5 L1219.5 216" fill="none" stroke="#9a9a9a" stroke-opacity="0.45" stroke-width="6" stroke-linecap="round" stroke-linejoin="round"/><circle cx="1057.1" cy="342.5" r="2.75" fill="#e2372d"/><circle cx="1060.1" cy="334" r="2.75" fill="#e2372d"/><circle cx="1063.4" cy="325.7" r="2.75" fill="#e2372d"/><circle cx="1066.9" cy="317.4" r="2.75" fill="#e2372d"/><circle cx="1070.7" cy="309.1" r="2.75" fill="#e2372d"/><circle cx="1074.4" cy="301.3" r="2.75" fill="#e2372d"/><circle cx="1078.9" cy="293" r="2.75" fill="#e2372d"/><circle cx="1084" cy="285" r="2.75" fill="#e2372d"/><circle cx="1089.2" cy="277.7" r="2.75" fill="#e2372d"/><circle cx="1094.8" cy="270.7" r="2.75" fill="#e2372d"/><circle cx="1100.6" cy="263.6" r="2.75" fill="#e2372d"/><circle cx="1106.8" cy="257.1" r="2.75" fill="#e2372d"/><circle cx="1113.4" cy="250.8" r="2.75" fill="#e2372d"/><circle cx="1119.9" cy="245.3" r="2.75" fill="#e2372d"/><circle cx="1126.9" cy="240" r="2.75" fill="#e2372d"/><circle cx="1134.2" cy="235" r="2.75" fill="#e2372d"/><circle cx="1141.8" cy="230.2" r="2.75" fill="#e2372d"/><circle cx="1149.8" cy="225.9" r="2.75" fill="#e2372d"/><circle cx="1157.8" cy="222.2" r="2.75" fill="#e2372d"/><circle cx="1166.4" cy="218.6" r="2.75" fill="#e2372d"/><circle cx="1175.2" cy="215.6" r="2.75" fill="#e2372d"/><circle cx="1184.2" cy="212.8" r="2.75" fill="#e2372d"/><circle cx="1193.1" cy="210.5" r="2.75" fill="#e2372d"/><circle cx="1202.2" cy="208.3" r="2.75" fill="#e2372d"/><circle cx="1211.6" cy="207" r="2.75" fill="#e2372d"/>
<path d="M1212 201 L1224 205.5 L1218.5 214.5" fill="none" stroke="#e2372d" stroke-width="6" stroke-linecap="round" stroke-linejoin="round"/>
</svg>
<div style="left:930px;top:353px;width:256px;height:41px;background:#fbfbfb;border-radius:3px"></div>
<div class="t" style="left:944px;top:359px;font-size:24.9px;line-height:30px;height:30px;color:#e2372d">LISTANJE KARTICA</div>
</div></body></html>
